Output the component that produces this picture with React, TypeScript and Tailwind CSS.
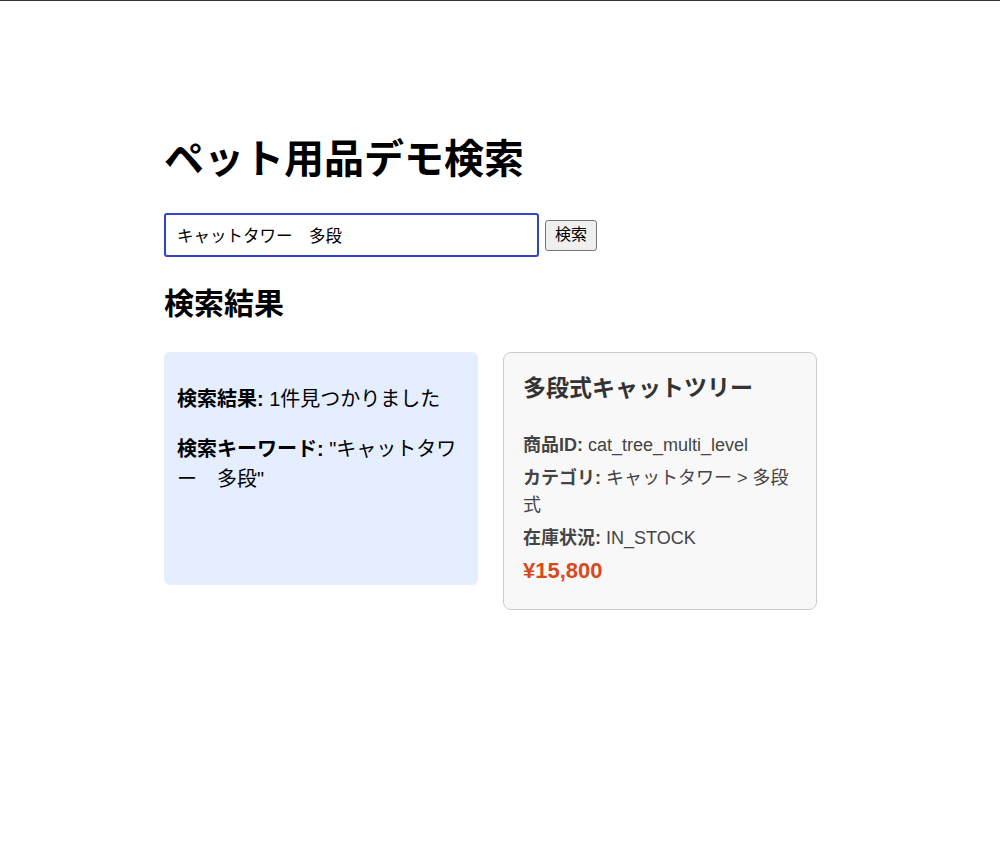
import { useState } from 'react';

const font = 'font-["Liberation_Sans","Noto_Sans_CJK_JP",sans-serif]';

export default function App() {
  const [query, setQuery] = useState('キャットタワー　多段');

  return (
    <div className={`min-h-[850px] border-t border-[#333] bg-white text-black ${font}`}>
      <div className="mx-auto max-w-[672px] pt-[134px]">
        <h1 className="text-[40px] font-bold leading-[1.2]">ペット用品デモ検索</h1>

        <div className="mt-[30px] flex items-center gap-[6px]">
          <input
            type="text"
            value={query}
            onChange={(e) => setQuery(e.target.value)}
            className="h-[44px] w-[375px] rounded-[3px] border-2 border-[#3344cc] px-[11px] text-[16.5px] outline-none"
          />
          <button className="h-[31px] rounded-[3px] border border-[#767676] bg-[#efefef] px-[9px] text-[16px] leading-none">
            検索
          </button>
        </div>

        <h2 className="mt-[28px] text-[30px] font-bold leading-[38px]">検索結果</h2>

        <div className="mt-[29px] flex items-start gap-[25px]">
          <div className="h-[233px] w-[314px] rounded-[6px] bg-[#e4eeff] px-[13px] pt-[32px] text-[20px] leading-[30px]">
            <p>
              <strong>検索結果:</strong> 1件見つかりました
            </p>
            <p className="mt-[20px]">
              <strong>検索キーワード:</strong> "{query}"
            </p>
          </div>

          <div className="w-[314px] rounded-[8px] border border-[#cccccc] bg-[#f8f8f8] px-[19px] pt-[19px] pb-[26px] text-[#444]">
            <h3 className="text-[23px] font-bold leading-[32px] text-[#333]">多段式キャットツリー</h3>
            <div className="mt-[28px] space-y-[6px] text-[18px] leading-[27px]">
              <p>
                <strong>商品ID:</strong> cat_tree_multi_level
              </p>
              <p>
                <strong>カテゴリ:</strong> キャットタワー &gt; 多段式
              </p>
              <p>
                <strong>在庫状況:</strong> IN_STOCK
              </p>
              <p className="text-[22px] font-bold leading-[25px] text-[#d9491b]">¥15,800</p>
            </div>
          </div>
        </div>
      </div>
    </div>
  );
}
